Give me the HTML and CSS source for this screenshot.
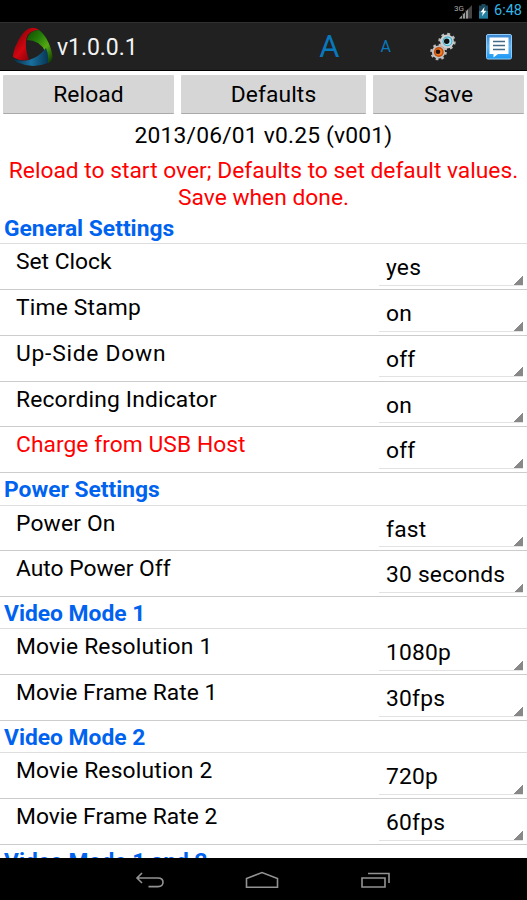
FILE: index.html
```html
<!DOCTYPE html>
<html lang="en">
<head>
<meta charset="utf-8">
<title>Settings</title>
<link rel="stylesheet" href="styles.css">
</head>
<body>
<div class="screen">
  <div class="status">
    <svg class="status-icons" width="40" height="20" viewBox="0 0 40 20">
      <text x="0" y="9.500" class="net">3G</text>
      <path d="M5 17.500L18 4V17.500Z" fill="#444"/>
      <path d="M5 17.500L14 8.300V17.500Z" fill="#999"/>
      <path d="M8.500 12V18M11.500 9V18" stroke="#222"/>
      <path d="M25 4.500h2.500V3h4v1.500H34v13h-9z" fill="#1b4a5e"/>
      <path d="M25 10h9v7.500h-9z" fill="#267e9f"/>
      <path d="M30.500 6l-4 5.200h2.300l-.8 4 4.300-5.400h-2.400z" fill="#fff"/>
    </svg>
    <span class="clock">6:48</span>
  </div>
  <header class="bar">
    <svg class="logo" width="42" height="42" viewBox="0 0 42 42">
      <defs>
        <linearGradient id="r" x1="0" y1="0" x2="1" y2="1"><stop offset="0" stop-color="#5c0004"/><stop offset=".5" stop-color="#d20610"/><stop offset="1" stop-color="#570006"/></linearGradient>
        <linearGradient id="g" x1="0" y1="0" x2=".9" y2="1"><stop offset="0" stop-color="#154600"/><stop offset=".35" stop-color="#237b08"/><stop offset=".65" stop-color="#55a913"/><stop offset="1" stop-color="#103c02"/></linearGradient>
        <linearGradient id="b"><stop offset="0" stop-color="#082d46"/><stop offset=".5" stop-color="#18709f"/><stop offset="1" stop-color="#073553"/></linearGradient>
      </defs>
      <path d="M1 31C1 23 8 10 13 5Q20-1 27 4Q17 4 14.500 12C13 19 14 26 17 34Q9 36 1 31Z" fill="url(#r)"/>
      <path d="M15 14Q17 4 27 4C34 9 40 22 40.500 31Q40 36 36 37Q35 23 26 17Q21 14 15 14Z" fill="url(#g)"/>
      <path d="M2 33Q9 36 17 34Q27 31 34 22Q37 29 36 37Q21 43 7 37Q3 36 2 33Z" fill="url(#b)"/>
    </svg>
    <h1 class="title">v1.0.0.1</h1>
    <nav class="actions">
      <span class="action big">A</span>
      <span class="action small">A</span>
      <span class="action gears">
        <svg width="28" height="30" viewBox="0 0 28 30">
          <g fill="none" stroke="#bbb">
            <circle cx="17" cy="9.500" r="7.400" stroke-width="2.600" stroke-dasharray="2.800 3.010"/>
            <circle cx="8.500" cy="20" r="7" stroke-width="2.600" stroke-dasharray="2.600 2.900"/>
          </g>
          <circle cx="17" cy="9.500" r="6.900" fill="#cfcfcf"/>
          <circle cx="17.500" cy="9.300" r="4.900" fill="#38aacb"/>
          <circle cx="17.500" cy="9.300" r="3.900" fill="#a8e2f2"/>
          <circle cx="16.700" cy="9.300" r="2.700" fill="#111"/>
          <circle cx="8.500" cy="20" r="6.600" fill="#c0c0c0"/>
          <circle cx="8.800" cy="20" r="4.900" fill="#c64b08"/>
          <circle cx="8.800" cy="20" r="3.500" fill="#f07b25"/>
          <circle cx="8" cy="19.700" r="2.300" fill="#211"/>
        </svg>
      </span>
      <span class="action">
        <svg width="28" height="28" viewBox="0 0 28 28">
          <defs><linearGradient id="c" x2="0" y2="1"><stop offset="0" stop-color="#3b86d0"/><stop offset=".5" stop-color="#62b4f2"/><stop offset="1" stop-color="#1898f4"/></linearGradient></defs>
          <rect x="1.500" y="1.500" width="25" height="24.500" rx="1.500" fill="url(#c)" stroke="#8fcbf8"/>
          <path d="M4.500 4.500h19v16.500H13l-4.500 3.500v-3.500h-4z" fill="#fff"/>
          <path d="M8 8.500h12M8 12.500h12M8 16.500h12" stroke="#426986" stroke-width="1.300"/>
        </svg>
      </span>
    </nav>
  </header>
  <main class="content">
    <div class="buttons">
      <button class="btn">Reload</button>
      <button class="btn">Defaults</button>
      <button class="btn">Save</button>
    </div>
    <p class="version">2013/06/01 v0.25 (v001)</p>
    <p class="hint">Reload to start over; Defaults to set default values.<br>Save when done.</p>
    <h2 class="section">General Settings</h2>
    <div class="row"><span class="label tight">Set Clock</span><span class="spinner">yes</span></div>
    <div class="row"><span class="label">Time Stamp</span><span class="spinner">on</span></div>
    <div class="row"><span class="label loose">Up-Side Down</span><span class="spinner">off</span></div>
    <div class="row"><span class="label">Recording Indicator</span><span class="spinner">on</span></div>
    <div class="row"><span class="label warn">Charge from USB Host</span><span class="spinner">off</span></div>
    <h2 class="section">Power Settings</h2>
    <div class="row"><span class="label">Power On</span><span class="spinner">fast</span></div>
    <div class="row"><span class="label tight">Auto Power Off</span><span class="spinner">30 seconds</span></div>
    <h2 class="section">Video Mode 1</h2>
    <div class="row"><span class="label">Movie Resolution 1</span><span class="spinner">1080p</span></div>
    <div class="row"><span class="label tight">Movie Frame Rate 1</span><span class="spinner">30fps</span></div>
    <h2 class="section">Video Mode 2</h2>
    <div class="row"><span class="label">Movie Resolution 2</span><span class="spinner">720p</span></div>
    <div class="row"><span class="label tight">Movie Frame Rate 2</span><span class="spinner">60fps</span></div>
    <h2 class="section">Video Mode 1 and 2</h2>
  </main>
  <footer class="nav">
    <svg class="back" width="30" height="20" viewBox="0 0 30 20"><path d="M7 2L2 7l5 5M2 7h21q5 0 5 4.300t-5 4.300H13.500" class="line"/></svg>
    <svg width="34" height="20" viewBox="0 0 34 20"><path d="M1.500 16.300V7.500L17 1.500l15.500 6v8.800z" class="line"/></svg>
    <svg width="32" height="20" viewBox="0 0 32 20"><path d="M2 7h23v9H2zM8 2.500h21V12" class="line"/></svg>
  </footer>
</div>
</body>
</html>
```
FILE: styles.css
```css
* { box-sizing: border-box; }
body { margin: 0; background: #fff; font-family: Roboto, sans-serif; font-size: 22.8px; color: #000; }
h1, h2, p { margin: 0; font-weight: 400; }
.screen { width: 527px; height: 900px; display: flex; flex-direction: column; overflow: hidden; }
.status { height: 22px; flex: none; background: #000; display: flex; justify-content: flex-end; align-items: center; padding-right: 5px; }
.net { font: 8px Roboto, sans-serif; fill: #aaa; }
.clock { color: #33b5e5; font-size: 14.5px; line-height: 22px; }
.bar { height: 49px; flex: none; background: #212121; border-top: 1px solid #303030; border-bottom: 1px solid #000; display: flex; align-items: center; padding-left: 12px; }
.title { margin-left: 3px; padding-top: 2px; color: #f3f3f3; font-size: 23px; line-height: 46px; letter-spacing: -.05px; }
.actions { margin-left: auto; display: flex; }
.action { width: 56.5px; height: 46px; display: flex; align-items: center; justify-content: center; color: #0878bd; }
.big { font-size: 31px; }
.small { font-size: 16px; }
.gears { padding-left: 3px; }
.content { flex: 1; min-height: 0; overflow: hidden; }
.buttons { display: grid; grid-template-columns: 171px 185px 151px; gap: 7px; padding: 4px 3px 0; }
.btn { height: 39px; border: 0; border-bottom: 1px solid #aaa; border-radius: 1px; padding: 2px 0 0; background: #d6d6d6; color: #000; font: 22.8px/36px Roboto, sans-serif; letter-spacing: .1px; }
.version { margin-top: 8px; text-align: center; line-height: 27px; letter-spacing: .2px; }
.hint { margin-top: 9px; height: 54px; color: #f00; text-align: center; line-height: 26.5px; white-space: nowrap; }
.section { height: 32.4px; padding: 1px 0 0 4px; border-bottom: 1px solid #dedede; color: #0063f0; font-weight: 700; font-size: 22.8px; line-height: 31px; }
.row { height: 45.75px; display: flex; justify-content: space-between; border-bottom: 1px solid #ccc; padding: 0 4px 0 16px; }
.label { line-height: 36px; letter-spacing: .18px; }
.tight { letter-spacing: 0; }
.loose { letter-spacing: .75px; }
.warn { color: #f00; letter-spacing: .05px; }
.spinner { width: 144px; height: 41.5px; padding: 7px 0 0 7px; border-bottom: 1px solid #e2e2e2; line-height: 34px; letter-spacing: .2px; background: linear-gradient(135deg, transparent 50%, #888 50%) right bottom / 10px 10px no-repeat border-box; }
.nav { height: 42px; flex: none; background: #000; display: flex; justify-content: center; align-items: center; gap: 81px; padding-top: 3px; }
.back { margin-right: -1px; }
.line { fill: none; stroke: #939393; stroke-width: 1.6; }
```
